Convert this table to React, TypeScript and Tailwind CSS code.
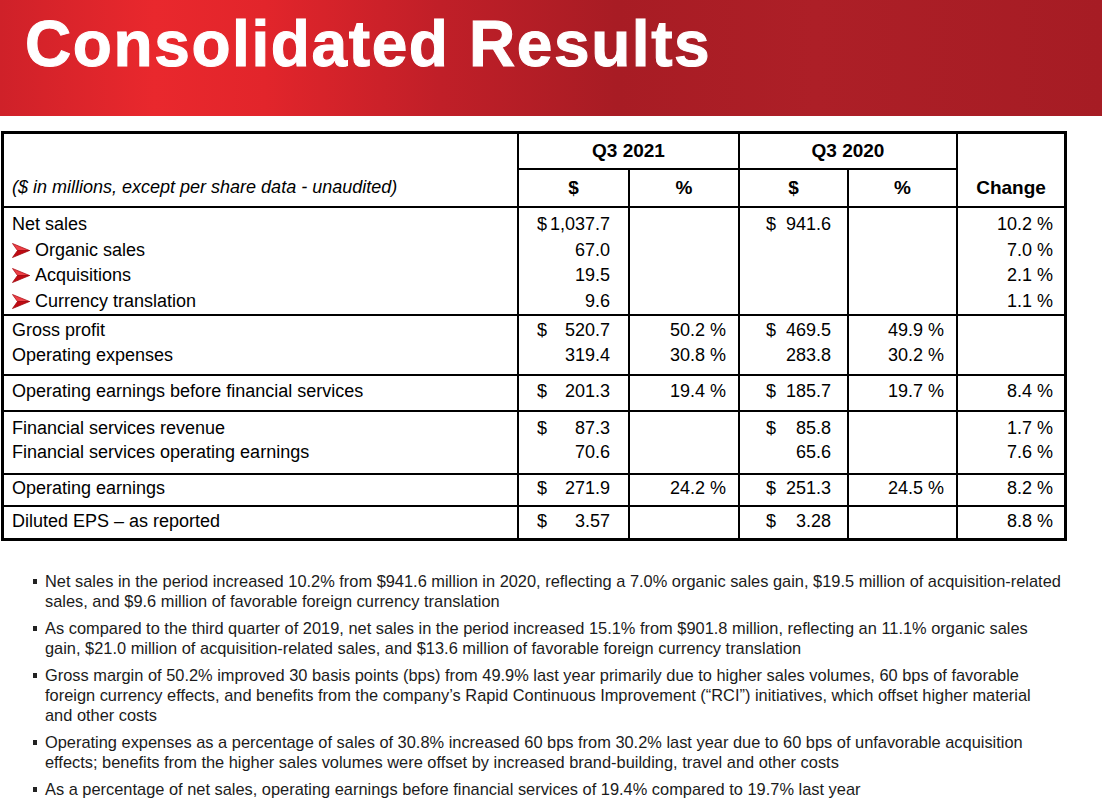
import React from "react";

type Line = { label: string; arrow?: boolean };

interface Group {
  pt: string;
  leading: string;
  labels: Line[];
  c21: (string | null)[];
  c21dollar: boolean[];
  p21: string[];
  c20: (string | null)[];
  c20dollar: boolean[];
  p20: string[];
  change: string[];
}

const groups: Group[] = [
  {
    pt: "pt-[4px]",
    leading: "leading-[25.6px]",
    labels: [
      { label: "Net sales" },
      { label: "Organic sales", arrow: true },
      { label: "Acquisitions", arrow: true },
      { label: "Currency translation", arrow: true },
    ],
    c21: ["1,037.7", "67.0", "19.5", "9.6"],
    c21dollar: [true, false, false, false],
    p21: [],
    c20: ["941.6"],
    c20dollar: [true],
    p20: [],
    change: ["10.2 %", "7.0 %", "2.1 %", "1.1 %"],
  },
  {
    pt: "pt-[2px]",
    leading: "leading-[25px]",
    labels: [{ label: "Gross profit" }, { label: "Operating expenses" }],
    c21: ["520.7", "319.4"],
    c21dollar: [true, false],
    p21: ["50.2 %", "30.8 %"],
    c20: ["469.5", "283.8"],
    c20dollar: [true, false],
    p20: ["49.9 %", "30.2 %"],
    change: [],
  },
  {
    pt: "pt-[3px]",
    leading: "leading-[25px]",
    labels: [{ label: "Operating earnings before financial services" }],
    c21: ["201.3"],
    c21dollar: [true],
    p21: ["19.4 %"],
    c20: ["185.7"],
    c20dollar: [true],
    p20: ["19.7 %"],
    change: ["8.4 %"],
  },
  {
    pt: "pt-[4px]",
    leading: "leading-[24px]",
    labels: [
      { label: "Financial services revenue" },
      { label: "Financial services operating earnings" },
    ],
    c21: ["87.3", "70.6"],
    c21dollar: [true, false],
    p21: [],
    c20: ["85.8", "65.6"],
    c20dollar: [true, false],
    p20: [],
    change: ["1.7 %", "7.6 %"],
  },
  {
    pt: "pt-[1px]",
    leading: "leading-[25px]",
    labels: [{ label: "Operating earnings" }],
    c21: ["271.9"],
    c21dollar: [true],
    p21: ["24.2 %"],
    c20: ["251.3"],
    c20dollar: [true],
    p20: ["24.5 %"],
    change: ["8.2 %"],
  },
  {
    pt: "pt-[2px]",
    leading: "leading-[25px]",
    labels: [{ label: "Diluted EPS – as reported" }],
    c21: ["3.57"],
    c21dollar: [true],
    p21: [],
    c20: ["3.28"],
    c20dollar: [true],
    p20: [],
    change: ["8.8 %"],
  },
];

const bullets: string[][] = [
  [
    "Net sales in the period increased 10.2% from $941.6 million in 2020, reflecting a 7.0% organic sales gain, $19.5 million of acquisition-related",
    "sales, and $9.6 million of favorable foreign currency translation",
  ],
  [
    "As compared to the third quarter of 2019, net sales in the period increased 15.1% from $901.8 million, reflecting an 11.1% organic sales",
    "gain, $21.0 million of acquisition-related sales, and $13.6 million of favorable foreign currency translation",
  ],
  [
    "Gross margin of 50.2% improved 30 basis points (bps) from 49.9% last year primarily due to higher sales volumes, 60 bps of favorable",
    "foreign currency effects, and benefits from the company’s Rapid Continuous Improvement (“RCI”) initiatives, which offset higher material",
    "and other costs",
  ],
  [
    "Operating expenses as a percentage of sales of 30.8% increased 60 bps from 30.2% last year due to 60 bps of unfavorable acquisition",
    "effects; benefits from the higher sales volumes were offset by increased brand-building, travel and other costs",
  ],
  [
    "As a percentage of net sales, operating earnings before financial services of 19.4% compared to 19.7% last year",
  ],
];

const Arrow = () => (
  <svg width="18" height="15" viewBox="0 0 18 15" className="shrink-0">
    <path d="M0.5 0.5 L17.5 7.5 L5.5 7.5 Z" fill="#ee4046" stroke="#b0121a" strokeWidth="0.8" />
    <path d="M5.5 7.5 L17.5 7.5 L0.5 14.5 Z" fill="#c00a12" stroke="#a00a10" strokeWidth="0.8" />
  </svg>
);

const App = () => {
  return (
    <div className="w-[1102px] h-[803px] overflow-hidden bg-white text-black font-['Liberation_Sans',Arial,sans-serif]">
      {/* title band */}
      <div className="h-[116px] bg-[linear-gradient(90deg,#cf2129_0%,#e9282d_14%,#e2252b_24%,#c01f28_40%,#a81c24_56%,#ad1f27_74%,#a61c24_100%)]">
        <h1 className="pl-[25px] pt-[12px] text-[64px] leading-none font-bold tracking-[1.6px] text-white [-webkit-text-stroke:1px_white]">
          Consolidated Results
        </h1>
      </div>

      {/* results table */}
      <div className="ml-[1px] mt-[15px] w-[1066px] border-[3px] border-black bg-black grid gap-[2px] grid-cols-[513px_109px_108px_107px_107px_106px] grid-rows-[34px_36px_106px_58px_34px_61px_30px_31px] text-[18px]">
        <div className="row-span-2 bg-white flex items-end pl-[8px] pb-[6px] leading-[25px] italic">
          ($ in millions, except per share data - unaudited)
        </div>
        <div className="col-span-2 bg-white flex items-center justify-center font-bold text-[19px]">Q3 2021</div>
        <div className="col-span-2 bg-white flex items-center justify-center font-bold text-[19px]">Q3 2020</div>
        <div className="row-span-2 bg-white flex items-end justify-center pb-[6px] leading-[25px] font-bold text-[19px]">
          Change
        </div>
        <div className="bg-white flex items-center justify-center font-bold text-[19px]">$</div>
        <div className="bg-white flex items-center justify-center font-bold text-[19px]">%</div>
        <div className="bg-white flex items-center justify-center font-bold text-[19px]">$</div>
        <div className="bg-white flex items-center justify-center font-bold text-[19px]">%</div>

        {groups.map((g, gi) => (
          <React.Fragment key={gi}>
            <div className={`bg-white pl-[8px] ${g.pt} ${g.leading}`}>
              {g.labels.map((l) => (
                <div key={l.label} className="flex items-center">
                  {l.arrow && (
                    <span className="mr-[5px] flex items-center">
                      <Arrow />
                    </span>
                  )}
                  <span>{l.label}</span>
                </div>
              ))}
            </div>
            <div className={`bg-white pl-[18px] pr-[18px] ${g.pt} ${g.leading}`}>
              {g.c21.map((v, i) => (
                <div key={i} className="flex justify-between">
                  <span>{g.c21dollar[i] ? "$" : ""}</span>
                  <span>{v}</span>
                </div>
              ))}
            </div>
            <div className={`bg-white pr-[12px] text-right ${g.pt} ${g.leading}`}>
              {g.p21.map((v) => (
                <div key={v}>{v}</div>
              ))}
            </div>
            <div className={`bg-white pl-[26px] pr-[16px] ${g.pt} ${g.leading}`}>
              {g.c20.map((v, i) => (
                <div key={i} className="flex justify-between">
                  <span>{g.c20dollar[i] ? "$" : ""}</span>
                  <span>{v}</span>
                </div>
              ))}
            </div>
            <div className={`bg-white pr-[12px] text-right ${g.pt} ${g.leading}`}>
              {g.p20.map((v) => (
                <div key={v}>{v}</div>
              ))}
            </div>
            <div className={`bg-white pr-[11px] text-right ${g.pt} ${g.leading}`}>
              {g.change.map((v) => (
                <div key={v}>{v}</div>
              ))}
            </div>
          </React.Fragment>
        ))}
      </div>

      {/* commentary */}
      <div className="mt-[30px] pl-[33px] space-y-[7px] text-[16.4px] leading-[20px] text-[#1b1b1b]">
        {bullets.map((b, i) => (
          <div key={i} className="flex">
            <div className="w-[12px] shrink-0 pt-[8px]">
              <div className="w-[4px] h-[5px] bg-[#222]" />
            </div>
            <div className="whitespace-nowrap">
              {b.map((line, j) => (
                <div key={j}>{line}</div>
              ))}
            </div>
          </div>
        ))}
      </div>
    </div>
  );
};

export default App;
